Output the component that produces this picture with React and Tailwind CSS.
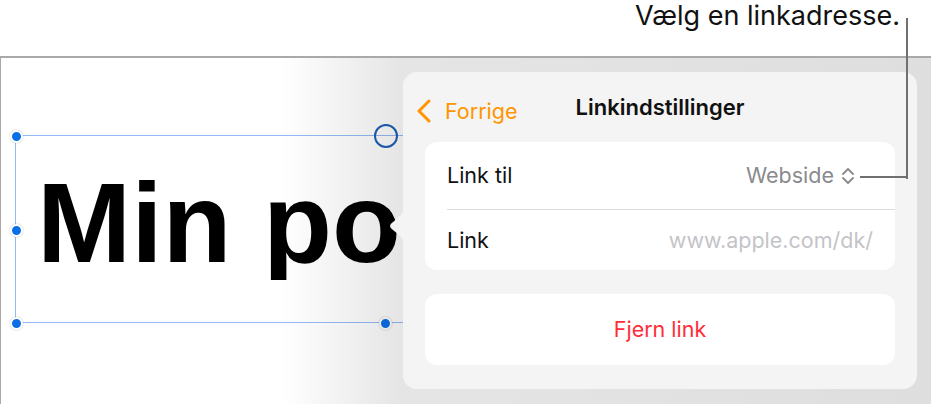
import React from 'react';

const ui = { fontFamily: 'Inter, "Noto Sans", sans-serif' };

function Handle({ className }) {
  return (
    <span
      className={`absolute w-[13px] h-[13px] -ml-[6.5px] -mt-[6.5px] rounded-full bg-[#0a6fe6] border-2 border-white shadow-[0_0_2px_rgba(0,0,0,0.25)] ${className}`}
    />
  );
}

function Chevron() {
  return (
    <svg width="14" height="24" viewBox="0 0 14 24" className="shrink-0">
      <path d="M12 2 L2 12 L12 22" fill="none" stroke="#ff9500" strokeWidth="3" strokeLinecap="round" strokeLinejoin="round" />
    </svg>
  );
}

function UpDown() {
  return (
    <svg width="14" height="18" viewBox="0 0 14 18" className="shrink-0">
      <path d="M2 7 L7 2 L12 7 M2 11 L7 16 L12 11" fill="none" stroke="#8a8a8e" strokeWidth="1.8" strokeLinecap="round" strokeLinejoin="round" />
    </svg>
  );
}

export default function App() {
  return (
    <div className="relative w-[931px] h-[404px] overflow-hidden bg-white" style={ui}>
      {/* Légende */}
      <div className="h-[56px] flex justify-end items-start pr-[31px]">
        <span className="text-[27px] leading-[32px] text-[#111]">Vælg en linkadresse.</span>
      </div>

      {/* Canvas */}
      <div className="relative h-[348px] border-t-2 border-l border-[#a9a9a9]">
        <div className="relative ml-[14px] mt-[77px] w-[390px] h-[188px] border-t border-b border-l border-[#94bbf7]">
          <div
            className="w-[388px] overflow-hidden pl-[21px] pt-[31px] text-[113px] leading-[113px] font-bold text-black whitespace-nowrap"
            style={{ fontFamily: '"Liberation Sans", Arial, sans-serif' }}
          >
            Min po
          </div>
          <Handle className="left-0 top-0" />
          <Handle className="left-0 top-[94px]" />
          <Handle className="left-0 top-[187px]" />
          <Handle className="left-[369px] top-[187px]" />
          <span className="absolute left-[358px] top-[-12px] w-[24px] h-[24px] rounded-full border-2 border-[#1c5fb8]" />
        </div>
        <div className="absolute inset-0 pointer-events-none bg-[linear-gradient(to_right,rgba(0,0,0,0)_280px,rgba(0,0,0,0.1)_400px,rgba(0,0,0,0.13)_931px)]" />
      </div>

      {/* Popover */}
      <div className="absolute left-[403px] top-[72px] w-[514px] h-[317px] rounded-[14px] bg-[#f4f4f4] px-[22px] flex flex-col">
        <svg width="18" height="40" viewBox="0 0 18 40" className="absolute left-[-17px] top-[134px]">
          <path d="M18 0 C18 8 13 11 7 16 Q1 20 7 24 C13 29 18 32 18 40 Z" fill="#f4f4f4" />
        </svg>
        <div className="h-[70px] relative flex items-center justify-center">
          <div className="absolute left-[-8px] top-[23px] flex items-center gap-[14px] text-[#ff9500] text-[21.5px]">
            <Chevron />
            <span>Forrige</span>
          </div>
          <span className="text-[22px] font-semibold text-[#111]">Linkindstillinger</span>
        </div>

        <div className="bg-white rounded-[12px] text-[21.5px]">
          <div className="h-[67px] flex items-center justify-between pl-[22px] pr-[40px]">
            <span className="text-[#111]">Link til</span>
            <div className="flex items-center gap-[7px] text-[#8a8a8e]">
              <span>Webside</span>
              <UpDown />
            </div>
          </div>
          <div className="ml-[22px] border-t border-[#dcdcdc]" />
          <div className="h-[60px] flex items-center justify-between pl-[22px] pr-[22px]">
            <span className="text-[#111]">Link</span>
            <span className="text-[#c4c4c7]">www.apple.com/dk/</span>
          </div>
        </div>

        <div className="mt-[24px] h-[71px] bg-white rounded-[12px] flex items-center justify-center text-[21.5px] text-[#ff2d3a]">
          Fjern link
        </div>
      </div>

      {/* Trait de légende */}
      <div className="absolute left-[906px] top-[18px] w-[2px] h-[161px] bg-[#707070]" />
      <div className="absolute left-[860px] top-[176px] w-[48px] h-[2px] bg-[#707070]" />
    </div>
  );
}
